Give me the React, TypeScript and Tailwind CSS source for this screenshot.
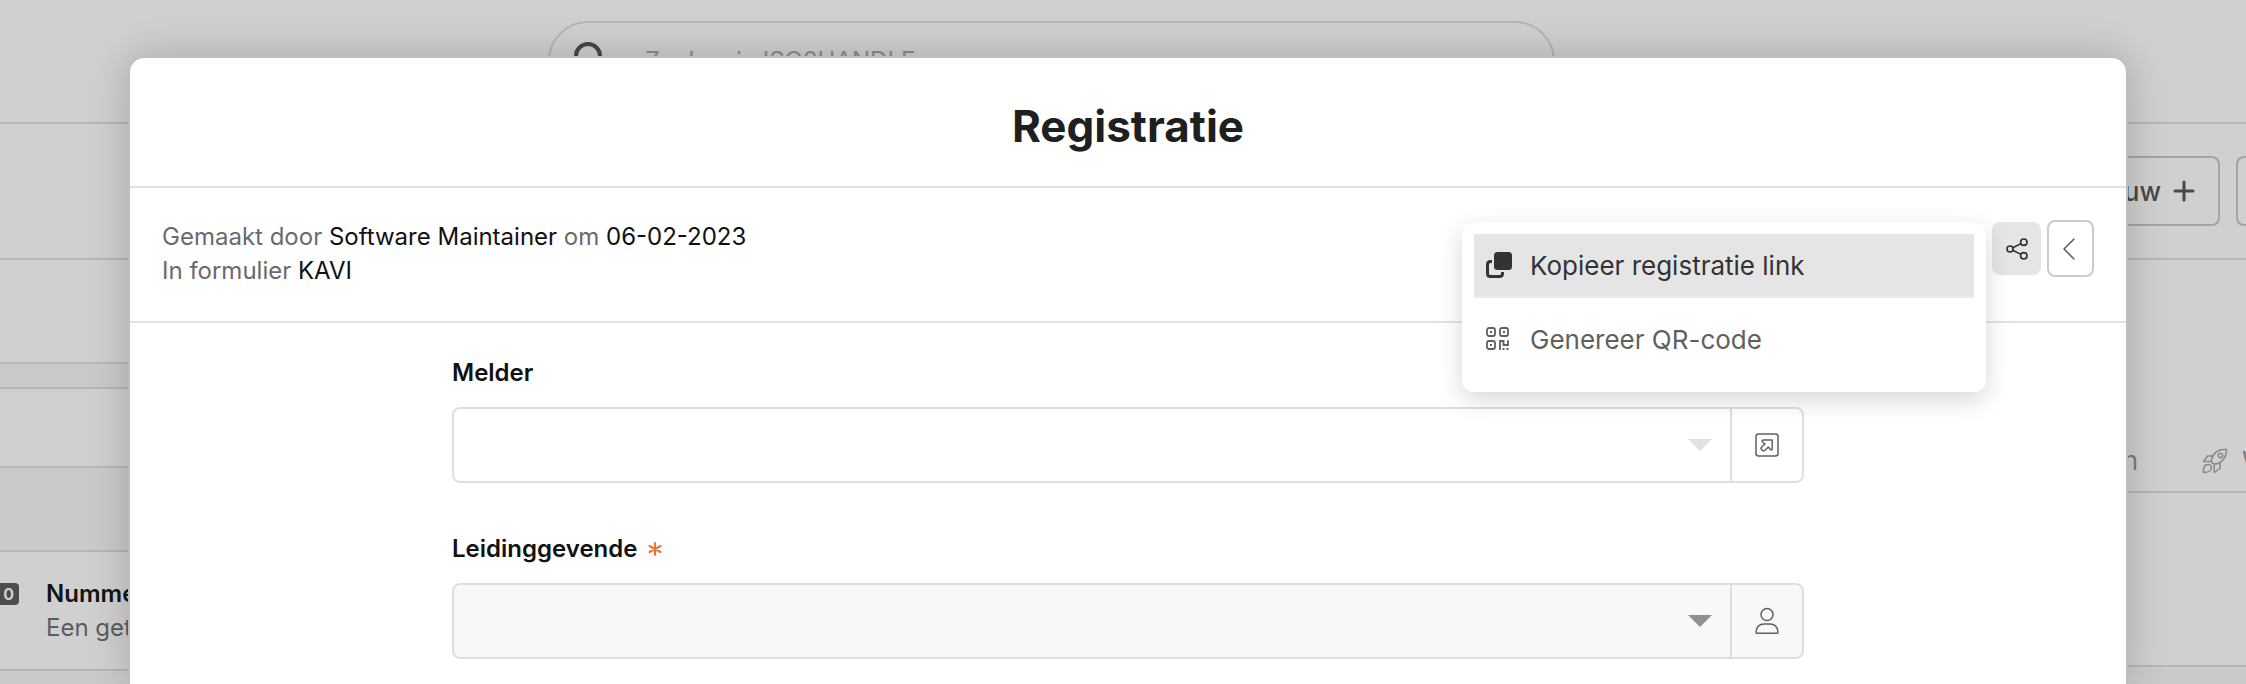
import type { ReactNode } from "react";

interface SelectFieldProps {
    id: string;
    label: string;
    required?: boolean;
    muted?: boolean;
    action: string;
    icon: ReactNode;
}

function SearchIcon() {
    return (
        <svg width="38" height="38" viewBox="0 0 38 38" fill="none" stroke="#484848" strokeWidth="4" strokeLinecap="round">
            <circle cx="14" cy="14" r="12" />
            <path d="M23 23L34 34" />
        </svg>
    );
}

function PlusIcon() {
    return (
        <svg width="22" height="22" viewBox="0 0 22 22" fill="none" stroke="#484848" strokeWidth="3" strokeLinecap="round">
            <path d="M11 2V20M2 11H20" />
        </svg>
    );
}

function RocketIcon() {
    return (
        <svg width="26" height="26" viewBox="0 0 26 26" fill="none" stroke="#888888" strokeWidth="1.5" strokeLinejoin="round">
            <path d="M24.5 1.5C19 1 14 3 11.5 7C10 9.5 9 12 9.5 13.5C10 15 11.5 16 13 16C15.5 16 19.5 14 22 10.5C24 7.5 24.7 4.5 24.5 1.5Z" />
            <circle cx="18.5" cy="7.5" r="2.2" />
            <path d="M11 8H5.5L1.5 13.5H9.5" />
            <path d="M18 15V20.5L12.2 24.5V16" />
            <path d="M1.5 24.5C1.2 19 2.5 16.5 6 16.5C8.5 16.5 9.8 18 9.5 20C9 23.5 6 24.5 1.5 24.5Z" />
        </svg>
    );
}

function CopyIcon() {
    return (
        <svg width="26" height="26" viewBox="0 0 26 26" fill="none">
            <rect x="8" y="0" width="18" height="18" rx="3.5" fill="#333333" />
            <path
                d="M6 9.5H4.5C2.5 9.5 1.5 10.5 1.5 12.5V21.5C1.5 23.5 2.5 24.5 4.5 24.5H13.5C15.5 24.5 16.5 23.5 16.5 21.5V20"
                stroke="#333333"
                strokeWidth="3"
            />
        </svg>
    );
}

function QrIcon() {
    return (
        <svg width="24" height="24" viewBox="0 0 24 24" fill="none" stroke="#606060" strokeWidth="1.8">
            <rect x="1" y="1" width="8" height="8" rx="2" />
            <rect x="14" y="1" width="8" height="8" rx="2" />
            <rect x="1" y="14" width="8" height="8" rx="2" />
            <path d="M14 23V14H17.5V18H22V13.2" />
            <g fill="#606060" stroke="none">
                <rect x="4" y="4" width="2" height="2" />
                <rect x="17" y="4" width="2" height="2" />
                <rect x="4" y="17" width="2" height="2" />
                <rect x="16.5" y="21" width="2" height="2" />
                <rect x="20.5" y="21" width="2" height="2" />
            </g>
        </svg>
    );
}

function ShareIcon() {
    return (
        <svg width="22" height="22" viewBox="0 0 22 22" fill="none" stroke="#2e2e2e" strokeWidth="1.6">
            <circle cx="4" cy="11" r="3" />
            <circle cx="17.8" cy="4.2" r="3.2" />
            <circle cx="17.8" cy="17.8" r="3.2" />
            <path d="M6.7 9.7L15 5.6M6.7 12.3L15 16.4" />
        </svg>
    );
}

function ChevronIcon() {
    return (
        <svg width="22" height="22" viewBox="0 0 22 22" fill="none" stroke="#5a5a5a" strokeWidth="1.5" strokeLinecap="round" strokeLinejoin="round">
            <path d="M14 1L4 11L14 21" />
        </svg>
    );
}

function OpenIcon() {
    return (
        <svg width="24" height="24" viewBox="0 0 24 24" fill="none" stroke="#606060" strokeWidth="1.5" strokeLinejoin="round">
            <rect x="1" y="1" width="22" height="22" rx="2.5" />
            <path d="M8 7H17.2V16.2C16.5 17.2 15.7 17.2 14.7 15.8L13.3 14L10 17.3C8 19 4.8 16 6.7 14L10 10.9L8 9.5C6.8 8.5 7 7.5 8 7Z" />
        </svg>
    );
}

function PersonIcon() {
    return (
        <svg width="24" height="28" viewBox="0 0 24 28" fill="none" stroke="#606060" strokeWidth="1.5" strokeLinejoin="round">
            <circle cx="12" cy="7.5" r="6" />
            <path d="M1 25.2C1 20 4.5 17 9 17H15C19.5 17 23 20 23 25.2C23 26 22.7 26.3 22 26.3H2C1.3 26.3 1 26 1 25.2Z" />
        </svg>
    );
}

function SelectField({ id, label, required, muted, action, icon }: SelectFieldProps) {
    return (
        <div>
            <label htmlFor={id} className="flex h-9 items-center text-2xl font-semibold text-[#111111]">
                {label}
                {required && (
                    <svg className="ml-[11px]" width="14" height="14" viewBox="0 0 14 14" stroke="#ef6f3c" strokeWidth="2" strokeLinecap="round">
                        <path d="M7 1V13M1.5 4L12.5 10M12.5 4L1.5 10" />
                    </svg>
                )}
            </label>
            <div className={`mt-4 flex h-[76px] overflow-hidden rounded-lg border-2 border-[#dedede] ${muted ? "bg-[#f7f9f8]" : "bg-white"}`}>
                <div className="relative flex-1">
                    <select id={id} className="h-full w-full appearance-none bg-transparent px-4 text-2xl outline-none">
                        <option value=""></option>
                    </select>
                    <svg
                        className="pointer-events-none absolute top-1/2 right-[18px] -mt-[6px]"
                        width="24"
                        height="12"
                        viewBox="0 0 24 12"
                        fill={muted ? "#8f9090" : "#e1e1e1"}
                    >
                        <path d="M0 0H24L12 12Z" />
                    </svg>
                </div>
                <button type="button" aria-label={action} className="flex w-[72px] items-center justify-center border-l-2 border-[#dedede]">
                    {icon}
                </button>
            </div>
        </div>
    );
}

/* Page that lies dimmed behind the dialog */
function Backdrop() {
    return (
        <div className="flex h-full flex-col">
            <header className="flex h-[124px] shrink-0 items-center border-b-2 border-[#b6b6b6] pl-[548px]">
                <label className="flex h-20 w-[1007px] items-center gap-[33px] rounded-full border-2 border-[#b6b6b6] pl-6">
                    <SearchIcon />
                    <input
                        type="search"
                        aria-label="Zoeken"
                        placeholder="Zoeken in ISO2HANDLE"
                        className="min-w-0 flex-1 bg-transparent text-2xl outline-none placeholder:text-[#8c8c8c]"
                    />
                </label>
            </header>
            <div className="flex h-[136px] shrink-0 items-center justify-end gap-4 border-b-2 border-[#b6b6b6]">
                <button type="button" className="flex h-[70px] items-center gap-3 rounded-lg border-2 border-[#a4a4a4] pr-[23px] pl-7 text-[26px] font-medium text-[#484848]">
                    Nieuw
                    <PlusIcon />
                </button>
                <div className="h-[70px] w-[10px] rounded-l-lg border-2 border-r-0 border-[#a4a4a4]" />
            </div>
            <div className="flex min-h-0 flex-1 justify-between">
                <div className="w-[400px] bg-[#cacac8]">
                    <div className="h-[104px] border-b-2 border-[#b6b6b6] bg-[#d0d0d0]" />
                    <div className="mt-[23px] h-[81px] border-y-2 border-[#b6b6b6] bg-[#d0d0d0]" />
                    <div className="mt-[82px] flex h-[121px] items-center border-y-2 border-[#b6b6b6] bg-[#d0d0d0]">
                        <div className="mb-[34px] flex h-[22px] w-[19px] items-center justify-end rounded-r bg-[#4c4c4c] pr-[5px] text-base font-bold text-[#d0d0d0]">
                            0
                        </div>
                        <div className="pl-[27px] text-2xl leading-[34px]">
                            <div className="font-semibold text-[#141414]">Nummer</div>
                            <div className="text-[#5c5c60]">Een getal</div>
                        </div>
                    </div>
                </div>
                <div className="flex w-[400px] flex-col">
                    <nav className="flex h-[233px] items-end justify-end gap-16 overflow-hidden border-b-2 border-[#b6b6b6] pb-[14px] text-[26px] leading-[32px] text-[#7c7c7c]">
                        <a href="#formulieren">Formulieren</a>
                        <a href="#workflows" className="flex w-11 shrink-0 items-center gap-[14px] whitespace-nowrap">
                            <span className="shrink-0">
                                <RocketIcon />
                            </span>
                            Workflows
                        </a>
                    </nav>
                    <div className="h-[174px] border-b-2 border-[#b6b6b6]" />
                    <div className="flex-1 bg-[#cacaca]" />
                </div>
            </div>
        </div>
    );
}

function ShareMenu() {
    return (
        <div role="menu" className="absolute top-0 right-[55px] w-[524px] rounded-xl bg-white px-3 pt-3 pb-5 text-[26px] shadow-[0_8px_24px_rgba(0,0,0,0.16)]">
            <button type="button" role="menuitem" className="flex h-16 w-full items-center gap-[18px] border-b-2 border-[#ebebeb] bg-[#e5e5e5] px-3 text-[#333333]">
                <CopyIcon />
                Kopieer registratie link
            </button>
            <button type="button" role="menuitem" className="mt-[10px] flex h-16 w-full items-center gap-5 border-b-2 border-transparent px-3 text-[#606060]">
                <QrIcon />
                Genereer QR-code
            </button>
        </div>
    );
}

export default function App() {
    return (
        <main className="relative h-screen overflow-hidden bg-[#d0d0d0] font-['Inter',sans-serif]">
            <Backdrop />

            <div className="absolute inset-0 overflow-hidden pt-14 pr-[118px] pl-32">
                <div
                    role="dialog"
                    aria-labelledby="dialog-title"
                    className="min-h-full rounded-t-2xl border-2 border-b-0 border-[#bfbfbf] bg-white bg-clip-padding shadow-[0_0_40px_rgba(0,0,0,0.2)]"
                >
                    <div className="flex h-[130px] items-center justify-center border-b-2 border-[#e1e1e1] pt-2">
                        <h1 id="dialog-title" className="text-[44px] font-bold text-[#1f1f1f]">
                            Registratie
                        </h1>
                    </div>

                    {/* Meta row with the share and collapse buttons */}
                    <div className="flex h-[135px] items-start justify-between border-b-2 border-[#e1e1e1] px-8">
                        <div className="pt-8 text-2xl leading-[34px] text-[#6a6a6e]">
                            <p>
                                Gemaakt door <span className="text-[#111111]">Software Maintainer</span> om{" "}
                                <span className="text-[#111111]">06-02-2023</span>
                            </p>
                            <p>
                                In formulier <span className="text-[#111111]">KAVI</span>
                            </p>
                        </div>
                        <div className="flex items-center gap-[6px] pt-8">
                            <div className="relative z-10">
                                <button type="button" aria-label="Delen" className="flex h-[53px] w-[49px] items-center justify-center rounded-lg bg-[#e5e5e5]">
                                    <ShareIcon />
                                </button>
                                <ShareMenu />
                            </div>
                            <button type="button" aria-label="Inklappen" className="flex h-[57px] w-[47px] items-center justify-center rounded-lg border-2 border-[#cbcbcb] bg-white">
                                <ChevronIcon />
                            </button>
                        </div>
                    </div>

                    <div className="flex flex-col gap-12 px-[322px] pt-8">
                        <SelectField id="melder" label="Melder" action="Openen" icon={<OpenIcon />} />
                        <SelectField id="leidinggevende" label="Leidinggevende" required muted action="Persoon kiezen" icon={<PersonIcon />} />
                    </div>
                </div>
            </div>
        </main>
    );
}
